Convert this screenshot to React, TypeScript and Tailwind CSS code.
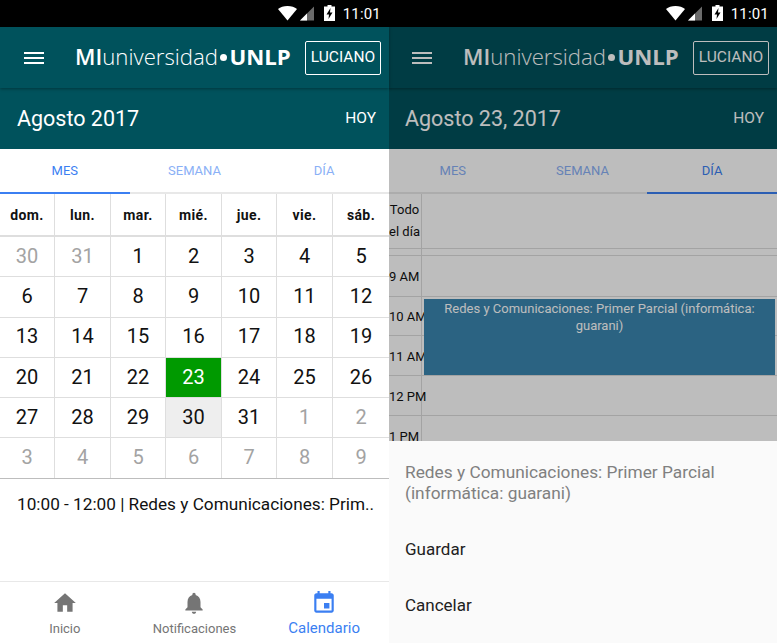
import React from 'react';

const roboto = { fontFamily: 'Roboto, sans-serif' };

const dias = ['dom.', 'lun.', 'mar.', 'mié.', 'jue.', 'vie.', 'sáb.'];

const semanas = [
    [30, 31, 1, 2, 3, 4, 5],
    [6, 7, 8, 9, 10, 11, 12],
    [13, 14, 15, 16, 17, 18, 19],
    [20, 21, 22, 23, 24, 25, 26],
    [27, 28, 29, 30, 31, 1, 2],
    [3, 4, 5, 6, 7, 8, 9],
];

const columnas = 'grid grid-cols-[55px_56px_55px_56px_55px_56px_1fr]';

function StatusBar() {
    return (
        <div className="h-[27px] shrink-0 bg-black flex items-center justify-end pr-[8px] text-white">
            <svg width="36" height="15" viewBox="0 0 36 15">
                <path d="M0 3C2.500 1 5.500 0 9.500 0S16.500 1 19 3L9.500 14.500z" fill="#fff" />
                <path d="M22 14.500L36 .5v14z" fill="#6b6b6b" />
                <path d="M22 14.500L29 7.500v7z" fill="#fff" />
            </svg>
            <svg className="ml-[10px] mr-[8px] -mt-[2px]" width="11" height="16" viewBox="0 0 11 16">
                <path d="M3.500 0h4v1.500H11V16H0V1.500h3.500z" fill="#fff" />
                <path d="M6.500 3L2.500 9.500h2.500l-.5 4.500 4-6.500H6z" fill="#000" />
            </svg>
            <span className="text-[15px] tracking-[.2px] pt-[1px]" style={roboto}>11:01</span>
        </div>
    );
}

function Header({ titulo }: { titulo: string }) {
    return (
        <>
            <div className="h-[61px] shrink-0 bg-[#00525c] flex items-center text-white shadow-[0_1px_3px_rgba(0,0,0,.35)] relative">
                <svg className="ml-[24px]" width="20" height="14" viewBox="0 0 20 14">
                    <path d="M0 1h20v2H0zM0 6h20v2H0zM0 11h20v2H0z" fill="#fff" />
                </svg>
                <div className="ml-[31px] w-[230px] flex items-center whitespace-nowrap text-[22.200px] leading-none" style={{ fontFamily: '"Open Sans", sans-serif' }}>
                    <span className="font-semibold">MI</span>
                    <span className="font-light">universidad</span>
                    <span className="inline-block w-[6.500px] h-[6.500px] rounded-full bg-white mx-[2.500px]" />
                    <span className="font-bold">UNLP</span>
                </div>
                <div className="w-[76px] h-[34px] border border-white rounded-[2px] flex items-center justify-center text-[15.500px]" style={roboto}>LUCIANO</div>
            </div>
            <div className="h-[61px] shrink-0 bg-[#00525c] flex items-center justify-between pl-[17px] pr-[13px] text-white" style={roboto}>
                <span className="text-[21.500px] pt-[1px]">{titulo}</span>
                <span className="text-[15.500px]">HOY</span>
            </div>
        </>
    );
}

function Tabs({ activo }: { activo: number }) {
    const tabs = ['MES', 'SEMANA', 'DÍA'];
    return (
        <div className="h-[45px] shrink-0 grid grid-cols-3 border-b-2 border-[#e8e8e8] bg-white" style={roboto}>
            {tabs.map((t, i) => (
                <div
                    key={t}
                    className={
                        'flex items-center justify-center text-[13px] -mb-[2px] border-b-2 ' +
                        (i == activo ? 'border-[#3b7ff2] text-[#3b7ff2]' : 'border-transparent text-[#8ab0f6]')
                    }
                >
                    {t}
                </div>
            ))}
        </div>
    );
}

function VistaMes() {
    return (
        <div className="flex-1 flex flex-col bg-white" style={roboto}>
            <div className={columnas + ' h-[43px] border-b-2 border-[#dedede]'}>
                {dias.map((d, i) => (
                    <div key={d} className={'flex items-center justify-center pt-[2px] text-[14px] font-bold text-[#111] tracking-[.4px] ' + (i < 6 ? 'border-r border-[#dedede]' : '')}>
                        {d}
                    </div>
                ))}
            </div>
            {semanas.map((sem, s) => (
                <div key={s} className={columnas + ' h-[40.300px] border-b ' + (s == 5 ? 'border-[#bdbdbd]' : 'border-[#dedede]')}>
                    {sem.map((n, i) => {
                        const fuera = (s == 0 && n > 20) || (s == 4 && n < 10) || s == 5;
                        const hoy = s == 3 && n == 23;
                        const marcado = s == 4 && n == 30;
                        return (
                            <div
                                key={i}
                                className={
                                    'flex items-center justify-center pb-[2px] text-[20px] ' +
                                    (i < 6 ? 'border-r border-[#dedede] ' : '') +
                                    (hoy ? 'bg-[#009a00] text-white ' : fuera ? 'text-[#a3a3a3] ' : 'text-[#111] ') +
                                    (marcado ? 'bg-[#eeeeee]' : '')
                                }
                            >
                                {n}
                            </div>
                        );
                    })}
                </div>
            ))}
            <div className="pl-[17px] pt-[13px] text-[17.200px] text-[#111] whitespace-nowrap">10:00 - 12:00 | Redes y Comunicaciones: Prim..</div>
        </div>
    );
}

function BottomNav() {
    const items = [
        { label: 'Inicio', d: 'M10 20v-6h4v6h5v-8h3L12 3 2 12h3v8z', activo: false },
        { label: 'Notificaciones', d: 'M12 22c1.100 0 2-.9 2-2h-4c0 1.100.89 2 2 2zm6-6v-5c0-3.070-1.640-5.640-4.500-6.320V4c0-.83-.67-1.500-1.500-1.500s-1.500.67-1.500 1.500v.68C7.630 5.360 6 7.920 6 11v5l-2 2v1h16v-1l-2-2z', activo: false },
        { label: 'Calendario', d: 'M17 12h-5v5h5v-5zM16 1v2H8V1H6v2H5c-1.110 0-1.990.9-1.990 2L3 19c0 1.100.89 2 2 2h14c1.100 0 2-.9 2-2V5c0-1.100-.9-2-2-2h-1V1h-2zm3 18H5V8h14v11z', activo: true },
    ];
    return (
        <div className="h-[62px] shrink-0 grid grid-cols-3 border-t border-[#e8e8e8] bg-white" style={roboto}>
            {items.map((it) => (
                <div key={it.label} className={'flex flex-col items-center pt-[8px] ' + (it.activo ? 'text-[#3b7ff2]' : 'text-[#757575]')}>
                    <svg width="26" height="26" viewBox="0 0 24 24" fill="currentColor"><path d={it.d} /></svg>
                    <span className={it.activo ? 'text-[15px] mt-[1px]' : 'text-[13px] mt-[3px]'}>{it.label}</span>
                </div>
            ))}
        </div>
    );
}

function VistaDia() {
    const horas = [
        { h: '9 AM', alto: 'h-[40.500px]' },
        { h: '10 AM', alto: 'h-[39.800px]' },
        { h: '11 AM', alto: 'h-[40px]' },
        { h: '12 PM', alto: 'h-[40px]' },
        { h: '1 PM', alto: 'h-[40px]' },
    ];
    return (
        <div className="flex-1 relative overflow-hidden bg-white text-[#111]" style={roboto}>
            <div className="flex h-[55px] border-b border-[#dcdcdc]">
                <div className="w-[34px] shrink-0 border-r border-[#dcdcdc] text-[13px] leading-[21.500px] pt-[5px] text-center whitespace-nowrap">
                    Todo<br />el día
                </div>
            </div>
            <div className="flex h-[7px] border-b border-[#dcdcdc]">
                <div className="w-[34px] shrink-0 border-r border-[#dcdcdc]" />
            </div>
            {horas.map((f) => (
                <div key={f.h} className={'flex border-b border-[#dcdcdc] ' + f.alto}>
                    <div className="w-[34px] shrink-0 border-r border-[#dcdcdc] text-[13px] flex items-center pl-[1px] pt-[1px] whitespace-nowrap">{f.h}</div>
                </div>
            ))}
            <div className="absolute left-[36px] right-[2px] top-[105px] h-[76px] bg-[#3a86b0] text-white text-[13px] leading-[16.500px] text-center pt-[2px]">
                Redes y Comunicaciones: Primer Parcial (informática: guarani)
            </div>
        </div>
    );
}

export default function App() {
    return (
        <div className="w-[777px] h-[643px] flex overflow-hidden">
            <div className="w-[389px] h-full shrink-0 flex flex-col relative z-10">
                <StatusBar />
                <Header titulo="Agosto 2017" />
                <Tabs activo={0} />
                <VistaMes />
                <BottomNav />
            </div>
            <div className="w-[389px] h-full shrink-0 -ml-[1px] flex flex-col relative">
                <StatusBar />
                <Header titulo="Agosto 23, 2017" />
                <Tabs activo={2} />
                <VistaDia />
                <div className="absolute left-0 right-0 top-[27px] bottom-0 bg-black/[.26]" />
                <div className="absolute left-0 right-0 bottom-0 h-[202px] bg-[#fafafa] text-[17px]" style={roboto}>
                    <div className="pl-[17px] pr-[16px] pt-[21px] leading-[21px] text-[#808080] text-[17.300px]">
                        Redes y Comunicaciones: Primer Parcial (informática: guarani)
                    </div>
                    <div className="pl-[17px] mt-[33px] text-[#212121]">Guardar</div>
                    <div className="pl-[17px] mt-[30px] text-[#212121]">Cancelar</div>
                </div>
            </div>
        </div>
    );
}
